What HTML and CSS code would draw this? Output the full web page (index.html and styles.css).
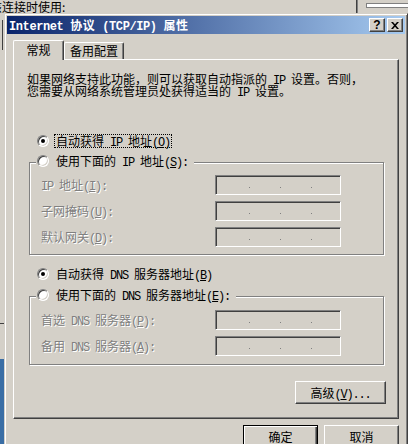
FILE: index.html
```html
<!DOCTYPE html>
<html>
<head>
<meta charset="utf-8">
<link rel="stylesheet" href="styles.css">
</head>
<body>
<div class="bgwin">
  <div class="bgtext">该连接时使用:</div>
  <div class="bgframe"></div>
  <div class="bglist"></div>
  <div class="bgline l1"></div>
  <div class="bgline l2"></div>
  <div class="bgsel"></div>
</div>
<div class="dlg">
  <div class="title">
    <span class="ttext"><span class="m">Internet </span>协议<span class="m"> (TCP/IP) </span>属性</span>
    <div class="tbtns">
      <span class="tb help">?</span>
      <span class="tb"><svg width="8" height="7" viewBox="0 0 8 7"><path d="M0 0h2l2 2.2L6 0h2L5 3.5 8 7H6L4 4.8 2 7H0l3-3.5z"/></svg></span>
    </div>
  </div>
  <div class="body">
    <div class="tabs">
      <div class="tab sel"><span>常规</span></div>
      <div class="tab"><span>备用配置</span></div>
    </div>
    <div class="panel">
      <p class="intro">如果网络支持此功能，则可以获取自动指派的<span class="m"> IP </span>设置。否则，<br>您需要从网络系统管理员处获得适当的<span class="m"> IP </span>设置。</p>
      <div class="opt r1"><span class="radio on"></span><span class="focus">自动获得<span class="m"> IP </span>地址<span class="m">(<u>O</u>)</span></span></div>
      <div class="group g1">
        <div class="legend"><span class="radio"></span><span class="otext">使用下面的<span class="m"> IP </span>地址<span class="m">(<u>S</u>):</span></span></div>
        <div class="fields">
          <span class="lbl"><span class="m">IP </span>地址<span class="m">(<u>I</u>):</span></span>
          <span class="ipf"><i></i><i></i><i></i></span>
          <span class="lbl">子网掩码<span class="m">(<u>U</u>):</span></span>
          <span class="ipf"><i></i><i></i><i></i></span>
          <span class="lbl">默认网关<span class="m">(<u>D</u>):</span></span>
          <span class="ipf"><i></i><i></i><i></i></span>
        </div>
      </div>
      <div class="opt r2"><span class="radio on"></span><span class="otext">自动获得<span class="m"> DNS </span>服务器地址<span class="m">(<u>B</u>)</span></span></div>
      <div class="group g2">
        <div class="legend"><span class="radio"></span><span class="otext">使用下面的<span class="m"> DNS </span>服务器地址<span class="m">(<u>E</u>):</span></span></div>
        <div class="fields">
          <span class="lbl">首选<span class="m"> DNS </span>服务器<span class="m">(<u>P</u>):</span></span>
          <span class="ipf"><i></i><i></i><i></i></span>
          <span class="lbl">备用<span class="m"> DNS </span>服务器<span class="m">(<u>A</u>):</span></span>
          <span class="ipf"><i></i><i></i><i></i></span>
        </div>
      </div>
      <div class="advrow"><button class="btn adv"><span>高级<span class="m">(<u>V</u>)...</span></span></button></div>
    </div>
    <div class="btns">
      <button class="btn def"><span>确定</span></button>
      <button class="btn"><span>取消</span></button>
    </div>
  </div>
</div>
</body>
</html>
```
FILE: styles.css
```css
* { box-sizing: border-box; margin: 0; padding: 0; }
html, body { width: 408px; height: 444px; overflow: hidden; }
body {
  background: #d4d0c8;
  font-family: "Noto Sans CJK SC", "Noto Sans", sans-serif;
  font-size: 12px;
  line-height: 12px;
  color: #000;
  position: relative;
}
.m {
  font-family: "Liberation Mono", monospace;
  font-size: 12px;
  letter-spacing: -1.2px;
  line-height: 0;
}
u { text-decoration: underline; text-underline-offset: 1px; }

/* background window (desktop) */
.bgwin { position: absolute; left: 0; top: 0; width: 408px; height: 444px; }
.bgtext { position: absolute; left: -10px; top: 1px; white-space: nowrap; }
.bgframe {
  position: absolute; left: 356px; top: -10px; width: 60px; height: 30px;
  border-left: 1px solid #404040; box-shadow: inset 1px 0 #808080;
}
.bglist {
  position: absolute; left: 366px; top: 3px; width: 50px; height: 5px;
  border: 1px solid #808080; border-right: none; background: #fff;
}
.bgline { position: absolute; left: -4px; width: 8px; height: 1px; background: #404040; }
.bgline.l1 { top: 20px; height: 30px; width: 1px; left: 2px; }
.bgline.l2 { top: 323px; }
.bgsel { position: absolute; left: 0; top: 359px; width: 4px; height: 90px; background: #3a6ea5; }

/* dialog window */
.dlg {
  position: absolute; left: 4px; top: 13px;
  width: 404px; height: 440px;
  background: #d4d0c8;
  border: 1px solid;
  border-color: #d4d0c8 #404040 #404040 #d4d0c8;
  box-shadow: inset 1px 1px #fff, inset -1px -1px #808080;
  padding: 2px;
}
.title {
  height: 18px;
  display: flex; align-items: center; justify-content: space-between;
  background: linear-gradient(90deg, #0a246a, #a6caf0);
  padding: 0 2px;
  color: #fff;
  font-weight: bold;
  white-space: nowrap;
}
.title .m { font-size: 12px; letter-spacing: -0.4px; }
.ttext { letter-spacing: 0.6px; }
.tbtns { display: flex; gap: 2px; }
.tb {
  width: 16px; height: 14px;
  background: #d4d0c8;
  border: 1px solid; border-color: #fff #404040 #404040 #fff;
  box-shadow: inset -1px -1px #808080;
  display: flex; align-items: center; justify-content: center;
  color: #000;
}
.tb.help { font-family: "Liberation Sans", sans-serif; font-size: 12px; font-weight: bold; line-height: 12px; }
.tb svg { display: block; fill: #000; }

.body { padding: 6px 6px 0; }
.tabs { display: flex; align-items: flex-end; height: 19px; }
.tab {
  height: 17px; width: 60px;
  border-top: 1px solid #fff; border-left: 1px solid #fff; border-right: 1px solid #404040;
  box-shadow: inset -1px 0 #808080;
  border-radius: 2px 2px 0 0;
  display: flex; align-items: center; justify-content: center;
  background: #d4d0c8;
}
.tab.sel {
  width: 51px; height: 20px; margin-bottom: -1px;
  position: relative; z-index: 1;
  padding-bottom: 1px;
}
.panel {
  height: 360px;
  border: 1px solid;
  border-color: #fff #404040 #404040 #fff;
  box-shadow: inset -1px -1px #808080;
  white-space: nowrap;
}
.intro { margin: 13px 0 0 13px; }
.opt { display: flex; align-items: center; height: 14px; padding-left: 23px; }
.r1 { margin-top: 37px; }
.r1 .radio { margin-right: 5px; }
.focus { border: 1px dotted #000; padding: 0 1px; height: 14px; line-height: 12px; }
.r2 { margin-top: 12px; }
.r2 .radio { margin-right: 7px; }

.radio {
  width: 12px; height: 12px; flex: none;
  border-radius: 50%;
  background: #fff;
  border: 1px solid; border-color: #808080 #fff #fff #808080;
  box-shadow: inset 1px 1px #404040, inset -1px -1px #d4d0c8;
  position: relative;
}
.radio.on::after {
  content: ""; position: absolute; left: 3px; top: 3px;
  width: 4px; height: 4px; border-radius: 50%; background: #000;
}

.group {
  border: 1px solid #808080;
  box-shadow: inset 1px 1px #fff, 1px 1px #fff;
  margin: 14px 14px 0 15px;
  padding-bottom: 7px;
}
.g2 { margin-top: 15px; padding-bottom: 8px; }
.legend {
  display: flex; align-items: center; height: 14px;
  width: fit-content;
  margin: -9px 0 0 6px;
  padding: 0 6px 0 1px;
  background: #d4d0c8;
}
.legend .radio { margin-right: 7px; }
.fields {
  display: grid;
  grid-template-columns: 174px 126px;
  grid-auto-rows: 20px;
  row-gap: 6px;
  align-items: center;
  margin: 7px 0 0 11px;
}
.g2 .fields { margin-top: 8px; }
.lbl { color: #808080; text-shadow: 1px 1px 0 #fff; }
.ipf {
  width: 126px; height: 20px;
  border: 1px solid; border-color: #808080 #fff #fff #808080;
  box-shadow: inset 1px 1px #404040, inset -1px -1px #d4d0c8;
  display: flex; align-items: flex-end; gap: 30px;
  padding: 0 0 6px 33px;
}
.ipf i { display: block; width: 1px; height: 1px; background: #808080; }

.advrow { display: flex; justify-content: flex-end; margin-top: 16px; padding-right: 12px; }
.btn {
  font: inherit; color: #000;
  height: 23px; width: 75px;
  background: #d4d0c8;
  border: 1px solid; border-color: #fff #404040 #404040 #fff;
  box-shadow: inset -1px -1px #808080;
  display: flex; align-items: center; justify-content: center;
  white-space: nowrap;
}
.btn.adv { width: 91px; }
.btn.def {
  border: 1px solid #000;
  box-shadow: inset 1px 1px #fff, inset -1px -1px #404040, inset -2px -2px #808080;
}
.btns { display: flex; justify-content: flex-end; gap: 6px; margin-top: 6px; }
```
